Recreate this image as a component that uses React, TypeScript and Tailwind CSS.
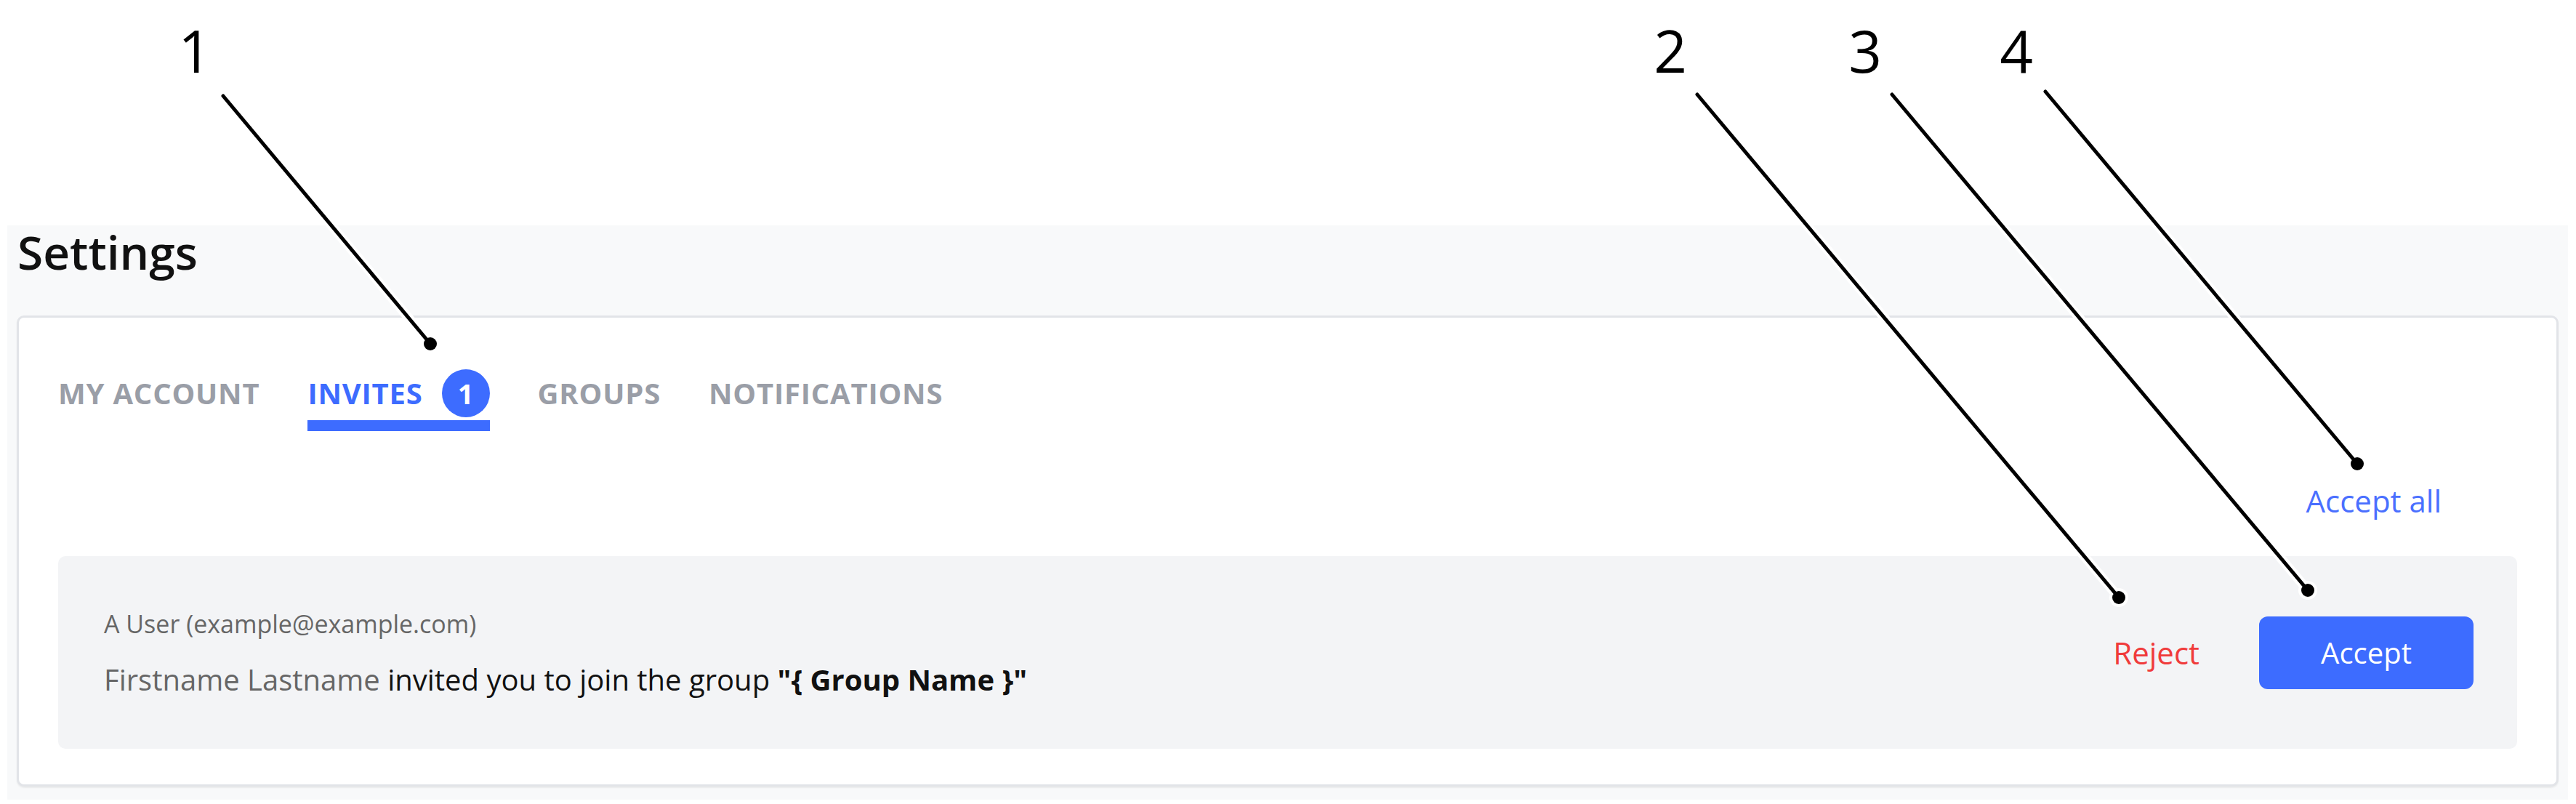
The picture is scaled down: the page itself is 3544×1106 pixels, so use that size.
import { useState } from 'react';

const tabs = [
  { id: 'account', label: 'MY ACCOUNT' },
  { id: 'invites', label: 'INVITES', count: 1 },
  { id: 'groups', label: 'GROUPS' },
  { id: 'notifications', label: 'NOTIFICATIONS' },
];

// callout lines drawn over the screenshot: [x1, y1, x2, y2]
const callouts = [
  { n: '1', tx: 268, line: [307, 132, 592, 473] },
  { n: '2', tx: 2298, line: [2335, 130, 2915, 822] },
  { n: '3', tx: 2566, line: [2603, 130, 3175, 812] },
  { n: '4', tx: 2774, line: [2814, 126, 3243, 638] },
];

function Callouts() {
  return (
    <svg
      className="absolute inset-0 pointer-events-none"
      width={3544}
      height={1106}
      viewBox="0 0 3544 1106"
    >
      {callouts.map((c) => (
        <g key={c.n}>
          <text
            x={c.tx}
            y={100}
            textAnchor="middle"
            fontFamily="'Open Sans', sans-serif"
            fontSize={80}
            fill="#000"
          >
            {c.n}
          </text>
          <line x1={c.line[0]} y1={c.line[1]} x2={c.line[2]} y2={c.line[3]} stroke="#fff" strokeWidth={13} strokeLinecap="round" />
          <circle cx={c.line[2]} cy={c.line[3]} r={13} fill="#fff" />
          <line x1={c.line[0]} y1={c.line[1]} x2={c.line[2]} y2={c.line[3]} stroke="#000" strokeWidth={5} strokeLinecap="round" />
          <circle cx={c.line[2]} cy={c.line[3]} r={9} fill="#000" />
        </g>
      ))}
    </svg>
  );
}

export default function App() {
  const [activeTab, setActiveTab] = useState('invites');

  return (
    <div className="relative w-[3544px] h-[1106px] bg-white font-['Open_Sans',sans-serif] overflow-hidden">
      <div className="h-[310px]" />

      {/* Settings panel */}
      <div className="ml-[10px] w-[3523px] h-[790px] bg-[#f8f9fa] pt-[5px] px-[13px]">
        <h1 className="text-[64px] leading-[64px] font-semibold text-[#111] pl-[1px]">Settings</h1>

        <div className="mt-[55px] bg-white border-[3px] border-[#e2e4e8] rounded-[10px] shadow-[0_2px_2px_rgba(0,0,0,0.06)] pt-[71px] pb-[49px] px-[54px]">
          {/* Tabs */}
          <div className="flex gap-[66px]">
            {tabs.map((tab) => {
              const active = tab.id === activeTab;
              return (
                <button
                  key={tab.id}
                  onClick={() => setActiveTab(tab.id)}
                  className="flex flex-col items-stretch"
                >
                  <span
                    className={`flex items-center h-[66px] gap-[26px] text-[40px] leading-[66px] font-bold tracking-[0.02em] ${
                      active ? 'text-[#3d6cff]' : 'text-[#9a9ea7]'
                    }`}
                  >
                    {tab.label}
                    {tab.count && (
                      <span className="w-[66px] h-[66px] rounded-full bg-[#3d6cff] text-white text-[38px] flex items-center justify-center tracking-normal">
                        {tab.count}
                      </span>
                    )}
                  </span>
                  <span className={`mt-[4px] h-[15px] ${active ? 'bg-[#3d6cff]' : 'bg-transparent'}`} />
                </button>
              );
            })}
          </div>

          {/* Accept all */}
          <div className="mt-[68px] flex justify-end pr-[104px]">
            <button className="text-[42px] leading-[56px] text-[#4a6fff]">Accept all</button>
          </div>

          {/* Invite row */}
          <div className="mt-[48px] h-[265px] bg-[#f3f4f6] rounded-[10px] pl-[63px] pr-[60px] flex items-center justify-between">
            <div className="flex flex-col">
              <span className="text-[34px] leading-[50px] text-[#666]">A User (example@example.com)</span>
              <p className="mt-[24px] text-[40px] leading-[56px] text-[#111]">
                <span className="text-[#666]">Firstname Lastname</span> invited you to join the group{' '}
                <span className="font-bold">"{'{'} Group Name {'}'}"</span>
              </p>
            </div>

            <div className="flex items-center gap-[82px]">
              <button className="text-[42px] leading-[56px] font-medium text-[#f03b3b]">Reject</button>
              <button className="w-[295px] h-[100px] rounded-[12px] bg-[#3d6cff] text-white text-[40px] font-medium">
                Accept
              </button>
            </div>
          </div>
        </div>
      </div>

      <Callouts />
    </div>
  );
}
